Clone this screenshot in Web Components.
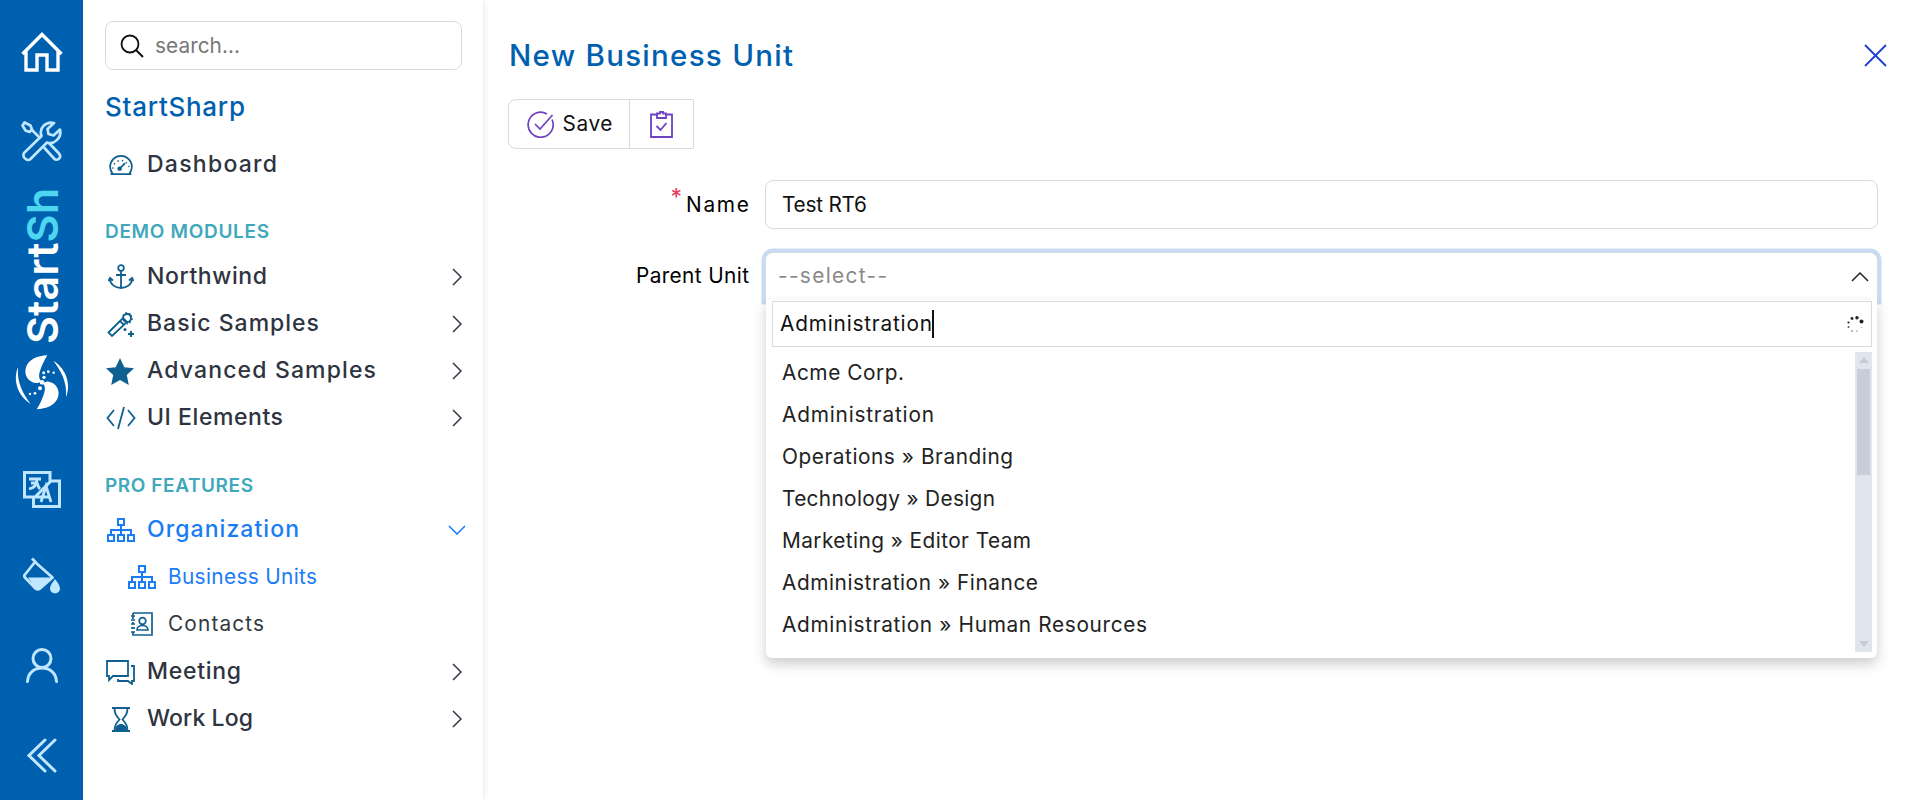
<!DOCTYPE html>
<html lang="en"><head><meta charset="utf-8"><title>New Business Unit</title>
<style>
html,body{margin:0;height:800px;overflow:hidden;background:#fff;font-family:Inter,"Noto Sans",sans-serif}
body{display:flex}
</style></head>
<body>
<app-rail></app-rail>
<app-sidebar></app-sidebar>
<unit-dialog></unit-dialog>
<script>
const FONT='Inter,"Noto Sans",sans-serif';
const cv=document.createElement('canvas').getContext('2d');
function fit(text,w,s,wt){cv.font=`${wt} ${s}px Inter`;cv.fontKerning='normal';return ((w-cv.measureText(text).width)/Math.max(1,text.length-1)).toFixed(3)}
function t(text,w,s,wt=400,c=''){return `<fit-text w="${w}" s="${s}" wt="${wt}" ${c?`style="color:${c}"`:''}>${text}</fit-text>`}
customElements.define('fit-text',class extends HTMLElement{
 connectedCallback(){if(this.shadowRoot)return;const s=this.getAttribute('s'),wt=this.getAttribute('wt'),w=+this.getAttribute('w');const ls=fit(this.textContent,w,s,wt);
 this.attachShadow({mode:'open'}).innerHTML=`<style>:host{display:inline-block;white-space:nowrap;font:${wt} ${s}px/1.2 ${FONT};letter-spacing:${ls}px;margin-right:${-ls}px}</style><slot></slot>`}
});
const IC='#0f6090';
const ICONS={
home:`<svg width="42" height="40" viewBox="0 0 42 40" fill="none" stroke="#fff" stroke-width="3.400"><path d="M1.500 22 21 2.500 40.500 22M5 18V38H16V23H26V38H37V18"/></svg>`,
tools:`<svg width="42" height="42" viewBox="0 0 42 42" fill="none" stroke="#bfe7ff" stroke-width="2.700" stroke-linejoin="round" stroke-linecap="round"><path d="M20.500 15 3.500 31.500C0 35 6 41.500 9.500 38L26 21.500C33 24 41 17 39 8.500L32.500 14.500 27.500 13 26.500 8 33 2C25 0 17.500 7 20.500 15Z"/><path d="M23.500 27 33 37.500c3.500 3.500 8.500-1.500 5-5L28.500 22.500M18.500 16.500 10.500 8.500"/><path d="M3.500 1.500 1.500 4.500 4.500 9.500l4 1.500 2.500-2.500-1.500-4z"/></svg>`,
logo:`<svg width="64" height="66" viewBox="0 0 192 198" fill="#fff"><path d="M112 16C84 17 56 28 48 52 41 74 54 96 76 99 84 100 90 97 92 92 86 84 86 74 90 63 95 48 102 32 112 16Z"/><path d="M80 178C108 177 136 166 144 142 151 120 138 98 116 95 108 94 102 97 100 102 106 110 106 120 102 131 97 146 90 162 80 178Z"/><path d="M24 52C10 85 18 134 62 162 40 132 20 100 24 52Z"/><path d="M168 142C182 109 174 60 130 32 152 62 172 94 168 142Z"/><circle cx="96" cy="97" r="7"/><circle cx="102" cy="82" r="5"/><circle cx="101" cy="68" r="4.500"/><circle cx="115" cy="65" r="4"/><circle cx="131" cy="68" r="3.500"/><circle cx="90" cy="115" r="6"/><circle cx="75" cy="130" r="4"/><circle cx="60" cy="132" r="3.500"/></svg>`,
lang:`<svg width="38" height="37" viewBox="0 0 38 37" fill="none" stroke="#bfe7ff"><path stroke-width="3" d="M19 26H1.500V1.500H27V10M12 26 28 10H36.500V35.500H10.500V26"/><path stroke-width="2.800" d="M6 8h12M14 8c0 6-3 9-8 10M8 12h6c1 3 2 5 3 6"/><path stroke-width="2.800" d="M18 31l5-16 5 16M20 26h6"/></svg>`,
bucket:`<svg width="38" height="38" viewBox="0 0 38 38"><path fill="none" stroke="#bfe7ff" stroke-width="2.800" stroke-linejoin="round" d="M9 1.500l4 4M12 5 29.500 20.500 17 31.500c-1.500 1.200-3 1.200-4.500 0L2 20.500c-1-1-1-2 0-3z"/><path fill="#bfe7ff" d="M5 20.500H28L17 31c-1.500 1.200-3 1.200-4.500 0z"/><path fill="#bfe7ff" d="M32 22c2 3 5 6 5 9.500a5 5 0 0 1-10 0c0-3.500 3-6.500 5-9.500z"/></svg>`,
user:`<svg width="32" height="35" viewBox="0 0 32 35" fill="none" stroke="#bfe7ff" stroke-width="3"><circle cx="16" cy="10.500" r="9"/><path stroke-linecap="round" d="M1.500 33.500C2 25 8 20 16 20s14 5 14.500 13.500"/></svg>`,
collapse:`<svg width="30" height="35" viewBox="0 0 30 35" fill="none" stroke="#bfe7ff" stroke-width="3" stroke-linecap="round"><path d="M18 2 2 17.500 18 33M28 2 12 17.500 28 33"/></svg>`,
gauge:`<svg width="24" height="20" viewBox="0 0 26 22" fill="none" stroke="${IC}" stroke-width="1.900"><path d="M4 21C2 18.500 1 16 1 13a12 12 0 0 1 24 0c0 3-1 5.500-3 8M1.500 21h23"/><path stroke-width="2" d="M11.500 15l6-6"/><circle cx="11.500" cy="15" r="1.500" fill="${IC}"/><path stroke-dasharray="1.500 3.500" stroke-width="1.500" d="M4 15A9 9 0 0 1 22 15"/></svg>`,
anchor:`<svg width="26" height="26" viewBox="0 0 26 26" fill="none" stroke="${IC}" stroke-width="1.800"><circle cx="13" cy="4" r="2.800"/><path d="M13 7v17M8 11h10M2 15c0 5 5 9 11 9s11-4 11-9M.5 17 2 14l3 2.500M25.500 17 24 14l-3 2.500"/></svg>`,
wand:`<svg width="28" height="28" viewBox="0 0 28 28" fill="none" stroke="${IC}" stroke-width="1.800"><path d="M1.500 22.500 16 8l4 4L5 26zM13 11l4 4"/><path stroke-dasharray="2 1.500" d="M16 6l3-3 2 1 3 0 0 3 1 2-2 3-1 1-2 1"/><circle cx="20" cy="8" r="4"/><path stroke-width="2" d="M24 21v6M21 24h6"/><circle cx="18" cy="19.500" r="1.500" fill="${IC}" stroke="none"/></svg>`,
star:`<svg width="28" height="27" viewBox="0 0 28 27" fill="${IC}" style="margin-left:-1px"><path d="M14 0l4.300 9.300 9.700 1-7.200 6.700 2 10L14 22l-8.800 5 2-10L0 10.300l9.700-1z"/></svg>`,
code:`<svg width="30" height="24" viewBox="0 0 30 24" fill="none" stroke="${IC}" stroke-width="1.800"><path d="M8 4 1.500 12 8 20M22 4l6.500 8-6.500 8M18 1l-6 22"/></svg>`,
org:(c,sz=28)=>`<svg width="${sz}" height="${sz*.86}" viewBox="0 0 28 24" fill="none" stroke="${c}" stroke-width="2"><rect x="11" y="1" width="6" height="6"/><rect x="1" y="17" width="6" height="6"/><rect x="11" y="17" width="6" height="6"/><rect x="21" y="17" width="6" height="6"/><path d="M14 7v10M4 17v-5h20v5"/></svg>`,
contacts:`<svg width="22" height="24" viewBox="0 0 22 24" fill="none" stroke="${IC}" stroke-width="1.700"><path d="M2 1h19v22H2v-3M2 17v-2M2 12v-2M2 7V1"/><path stroke-width="1.500" d="M0 4h4M0 8h4M0 12h4M0 16h4M0 20h4"/><circle cx="11.500" cy="9" r="3.300"/><path d="M6 18c0-6 11-6 11 0z"/></svg>`,
meeting:`<svg width="29" height="25" viewBox="0 0 29 25" fill="none" stroke="${IC}" stroke-width="1.800"><path d="M1 1h21v15H7l-4 4v-4H1z"/><path d="M25 6h3v15h-2v3l-4-3H12v-2"/></svg>`,
hour:`<svg width="20" height="25" viewBox="0 0 20 25" fill="none" stroke="${IC}" stroke-width="1.800"><path d="M1 1h18M1 24h18M3.500 1c0 6 2 8 5 11.500-3 3.500-5 5.500-5 11.500M16.500 1c0 6-2 8-5 11.500 3 3.500 5 5.500 5 11.500"/><path fill="${IC}" stroke="none" d="M4 24c0-5 3-7 6-7s6 2 6 7z"/></svg>`,
chevR:`<svg width="10" height="18" viewBox="0 0 10 18" fill="none" stroke="#2e3440" stroke-width="1.500"><path d="M1 1l8 8-8 8"/></svg>`,
chevD:c=>`<svg width="18" height="10" viewBox="0 0 18 10" fill="none" stroke="${c}" stroke-width="1.500"><path d="M1 1l8 8 8-8"/></svg>`,
search:`<svg width="24" height="24" viewBox="0 0 24 24" fill="none" stroke="#111" stroke-width="1.800"><circle cx="10" cy="10" r="8.500"/><path stroke-width="2" d="M16 16l7 7"/></svg>`,
saveIc:`<svg width="27" height="27" viewBox="0 0 27 27" fill="none" stroke="#6f42c1" stroke-width="1.700"><path d="M25 8.500A12.500 12.500 0 1 1 20 3"/><path d="M8 13l5 5L25.500 4"/></svg>`,
clip:`<svg width="23" height="27" viewBox="0 0 23 27" fill="none" stroke="#6f42c1" stroke-width="1.800"><path d="M7 3.500H1v22.500h21V3.500h-6"/><path d="M7 7V2.500h3V1h3v1.500h3V7z"/><path d="M6.500 15l4 4 6-7"/></svg>`,
close:`<svg width="23" height="23" viewBox="0 0 23 23" fill="none" stroke="#1d3fd0" stroke-width="1.800"><path d="M1 1l21 21M22 1 1 22"/></svg>`,
spinner:`<svg width="17" height="17" viewBox="0 0 17 17" fill="#222"><circle cx="14.500" cy="5.500" r="2"/><circle cx="10" cy="1.800" r="1.700"/><circle cx="5" cy="2.500" r="1.400"/><circle cx="1.500" cy="6.500" r="1.100"/><circle cx="1.500" cy="11" r=".9" opacity=".8"/><circle cx="5" cy="15" r=".8" opacity=".7"/><circle cx="10" cy="15" r=".7" opacity=".6"/><circle cx="14.500" cy="11.500" r=".6" opacity=".5"/></svg>`
};
class Base extends HTMLElement{
 connectedCallback(){if(!this.shadowRoot)this.attachShadow({mode:'open'}).innerHTML=this.html()}
}
customElements.define('app-rail',class extends Base{html(){return `<style>
:host{display:flex;flex:0 0 83px;height:800px;background:#0060b0;flex-direction:column;align-items:center;color:#fff}
.i{display:flex;justify-content:center}
.brand{margin-top:25px;writing-mode:vertical-rl;transform:rotate(180deg);line-height:31px;height:156px;white-space:nowrap;display:block;position:relative;left:1px}
.brand span{color:#4dd6ef}
</style>
<div class="i" style="margin-top:32px">${ICONS.home}</div>
<div class="i" style="margin-top:49px;">${ICONS.tools}</div>
<div class="brand" aria-label="StartSh"><fit-text w="156" s="43" wt="600">Start<span>Sh</span></fit-text></div>
<div class="i" style="margin-top:6px">${ICONS.logo}</div>
<div class="i" style="margin-top:55px">${ICONS.lang}</div>
<div class="i" style="margin-top:49px">${ICONS.bucket}</div>
<div class="i" style="margin-top:53px">${ICONS.user}</div>
<div class="i" style="margin-top:55px">${ICONS.collapse}</div>`}});
customElements.define('nav-item',class extends Base{html(){
 const g=a=>this.getAttribute(a);const col=g('color')||'#2e3440';
 return `<style>:host{display:flex;align-items:center;height:47px;padding-left:${g('sub')!=null?'20px':'0'};color:${col}}
 .ic{width:43px;flex:none;display:flex;justify-content:center;padding-right:${g('sub')!=null?'6px':'10px'};box-sizing:border-box;margin-left:-1px}
 :host([sub]) .ic{width:44px;padding-right:8px}
 .tx{flex:1}.ch{width:14px;display:flex;justify-content:center;margin-right:-2px;margin-left:-4px;}</style>
 <span class="ic"><slot name="icon"></slot></span><span class="tx"><slot></slot></span><span class="ch"><slot name="chev"></slot></span>`}});
customElements.define('nav-head',class extends Base{html(){return `<style>:host{display:block;height:24px;margin:${this.getAttribute('m')};color:#3fa8bc;line-height:24px}</style><slot></slot>`}});
customElements.define('search-box',class extends Base{html(){return `<style>:host{display:flex;align-items:center;height:49px;box-sizing:border-box;border:1px solid #d8dbe0;border-radius:8px;padding-left:14px;gap:11px;color:#777;background:#fff}svg{display:block}::slotted(*){margin-top:1px}</style>${ICONS.search}<slot></slot>`}});
customElements.define('app-sidebar',class extends Base{html(){
 const nav=(ic,text,w,chev=true,attrs='',size=23,wt=500,c='')=>`<nav-item ${attrs}><span slot="icon">${ic}</span>${t(text,w,size,wt,c)}${chev?`<span slot="chev">${ICONS.chevR}</span>`:''}</nav-item>`;
 return `<style>:host{display:block;flex:0 0 400px;height:800px;box-sizing:border-box;padding:21px 21px 0 22px;background:#fff;box-shadow:1px 0 7px rgba(0,0,0,.09);position:relative;z-index:1}
 .brand{height:36px;margin:21px 0 14.500px;line-height:36px;color:#0060b0}
 span[slot]{display:flex}svg{display:block}</style>
 <search-box>${t('search...',85,20.800,400,'#777')}</search-box>
 <div class="brand">${t('StartSharp',140,26,500)}</div>
 ${nav(ICONS.gauge,'Dashboard',130,false)}
 <nav-head m="31.500px 0 9.500px">${t('DEMO MODULES',164,19,600)}</nav-head>
 ${nav(ICONS.anchor,'Northwind',120)}
 ${nav(ICONS.wand,'Basic Samples',172)}
 ${nav(ICONS.star,'Advanced Samples',229)}
 ${nav(ICONS.code,'UI Elements',136)}
 <nav-head m="32.500px 0 8.500px">${t('PRO FEATURES',148,19,600)}</nav-head>
 <nav-item color="#1a7cf5"><span slot="icon">${ICONS.org('#1a7cf5')}</span>${t('Organization',152,23,500)}<span slot="chev">${ICONS.chevD('#1a7cf5')}</span></nav-item>
 <nav-item sub color="#1a7cf5"><span slot="icon">${ICONS.org('#1a7cf5')}</span>${t('Business Units',149,20.800,400)}</nav-item>
 <nav-item sub color="#33393f"><span slot="icon">${ICONS.contacts}</span>${t('Contacts',96,20.800,400)}</nav-item>
 <div style="height:1px"></div>
 ${nav(ICONS.meeting,'Meeting',94)}
 ${nav(ICONS.hour,'Work Log',106)}`}});
customElements.define('tool-bar',class extends Base{html(){return `<style>:host{display:inline-flex;height:50px;box-sizing:border-box;border:1px solid #d5dbe1;border-radius:8px 0 0 8px;color:#111;margin-left:-2px}
 .b{display:flex;align-items:center;justify-content:center}.a{width:121px;gap:8px;border-right:1px solid #d5dbe1;padding-left:2px;box-sizing:border-box}.c{width:63px}svg{display:block}</style>
 <div class="b a">${ICONS.saveIc}<slot></slot></div><div class="b c">${ICONS.clip}</div>`}});
customElements.define('form-row',class extends Base{html(){return `<style>:host{display:grid;grid-template-columns:239px 1fr;column-gap:16px;align-items:center;position:relative}
 .l{justify-self:end;display:flex;align-items:flex-start}.r{color:#e6395f;font:400 23px/1 ${FONT};margin-right:4px;margin-top:-6px}</style>
 <div class="l">${this.hasAttribute('required')?'<span class="r">*</span>':''}<slot name="label"></slot></div><div><slot></slot></div>`}});
customElements.define('text-box',class extends Base{html(){return `<style>:host{display:flex;align-items:center;height:49px;box-sizing:border-box;border:1px solid #d5dbe1;border-radius:8px;padding:1px 0 0 16px;color:#111}</style><slot></slot>`}});
customElements.define('select-box',class extends Base{html(){
 const rows=[['Acme Corp.',122],['Administration',152],['Operations » Branding',231],['Technology » Design',213],['Marketing » Editor Team',249],['Administration » Finance',256],['Administration » Human Resources',365]];
 return `<style>:host{display:block;position:relative;height:49px}
 .f{display:flex;align-items:center;justify-content:space-between;height:49px;box-sizing:border-box;border:1px solid #d5dbe1;border-radius:8px 8px 0 0;box-shadow:0 0 0 3.500px #c9dbf2;padding:0 8px 0 12px;margin-top:0;color:#888;background:#fff}
 .up{transform:rotate(180deg);display:flex}
 .d{position:absolute;left:1px;right:1px;top:48px;height:358px;background:#fff;box-sizing:border-box;border-radius:0 0 6px 6px;box-shadow:0 6px 13px rgba(0,0,0,.2);padding:1px 5px 0 6px;color:#222;display:flex;flex-direction:column}
 .s{height:46px;flex:none;box-sizing:border-box;border:1px solid #d5dbe1;display:flex;align-items:center;justify-content:space-between;padding:0 7px 0 7px;color:#111}
 .caret{display:inline-block;width:2px;height:28px;background:#111;vertical-align:middle;margin-left:0}
 .sl{display:flex;align-items:center}
 .m{display:flex;margin-top:5px;height:300px}
 .list{flex:1;padding-left:10px}
 .row{height:42px;display:flex;align-items:center}
 .bar{width:17px;background:#e0e4ec;position:relative;display:flex;flex-direction:column;align-items:center;justify-content:space-between}
 .ar{width:0;height:0;border:5px solid transparent;margin:5px 0}
 .ar.u{border-bottom:6px solid #c6ccd6;border-top:0}.ar.dn{border-top:6px solid #c6ccd6;border-bottom:0}
 .th{position:absolute;left:2px;right:2px;top:17px;height:106px;background:#c8ced9}
 svg{display:block}</style>
 <div class="f">${t('--select--',109,20.800,400)}<span class="up">${ICONS.chevD('#222')}</span></div>
 <div class="d"><div class="s"><span class="sl">${t('Administration',152,20.800,400)}<span class="caret"></span></span>${ICONS.spinner}</div>
 <div class="m"><div class="list">${rows.map(r=>`<div class="row">${t(r[0],r[1],20.800,400)}</div>`).join('')}</div>
 <div class="bar"><i class="ar u"></i><i class="th"></i><i class="ar dn"></i></div></div></div>`}});
customElements.define('unit-dialog',class extends Base{html(){return `<style>:host{display:block;flex:1;height:800px;box-sizing:border-box;padding:0 42px 0 27px;min-width:0}
 .h{display:flex;justify-content:space-between;align-items:center;height:43px;margin-top:34px;color:#0060b0;margin-left:-1px}
 .x{margin-right:-9px;display:flex}
 tool-bar{margin-top:22px}
 form-row{margin-top:31px}
 form-row+form-row{margin-top:23px}
 svg{display:block}</style>
 <div class="h">${t('New Business Unit',284,29.500,500)}<span class="x">${ICONS.close}</span></div>
 <tool-bar>${t('Save',50,20.800)}</tool-bar>
 <form-row required><span slot="label" style="padding-top:1px;display:block">${t('Name',63,20.800)}</span><text-box>${t('Test RT6',85,20.800)}</text-box></form-row>
 <form-row><span slot="label">${t('Parent Unit',113,20.800)}</span><select-box></select-box></form-row>`}});
</script>
</body></html>
